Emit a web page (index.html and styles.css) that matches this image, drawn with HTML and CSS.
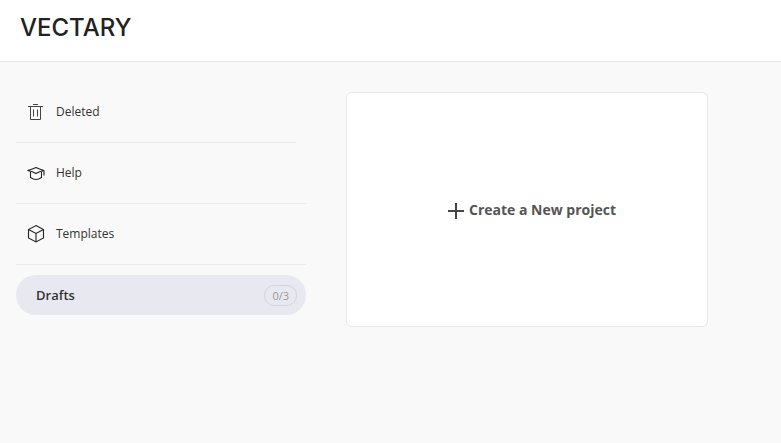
FILE: index.html
```html
<!DOCTYPE html>
<html lang="en">
	<head>
		<meta charset="UTF-8" />
		<meta name="viewport" content="width=device-width, initial-scale=1" />
		<title>Vectary</title>
		<link rel="stylesheet" href="styles.css">
	</head>
	<body>
		<header class="header">
			<a class="logo" href="#">VECTARY</a>
		</header>

		<main class="dashboard">
			<nav class="sidebar">
				<a class="nav-link nav-link-short" href="#deleted">
					<svg class="icon" viewBox="0 0 20 20" aria-hidden="true">
						<path d="M2 5.5h15M7 3.5h5M4.5 6v12.5h10V6M7.5 8.5v7M11.5 8.5v7" />
					</svg>
					Deleted
				</a>
				<a class="nav-link" href="#help">
					<svg class="icon icon-dark" viewBox="0 0 20 20" aria-hidden="true">
						<path d="M1.5 8.5Q7 7 10 5.5Q13 7 18 8.5Q13 9.5 10 11.5Q7 9.5 1.5 8.5zM4.5 10v5.5Q10 19.5 15.5 15.5V10M18 8.5v5" />
					</svg>
					Help
				</a>
				<a class="nav-link" href="#templates">
					<svg class="icon icon-dark" viewBox="0 0 20 20" aria-hidden="true">
						<path d="M10 2.5l7.5 4V15L10 19 2.5 15V6.5zM2.5 6.5l7.5 4 7.5-4M10 10.5V19" />
					</svg>
					Templates
				</a>
				<a class="drafts" href="#drafts">
					Drafts
					<span class="count">0/3</span>
				</a>
			</nav>

			<section class="projects">
				<button class="new-project" type="button">
					<svg class="plus" viewBox="0 0 16 18" aria-hidden="true">
						<path d="M8 2v16M0 10h16" />
					</svg>
					Create a New project
				</button>
			</section>
		</main>
	</body>
</html>
```

FILE: styles.css
```css
* {
	box-sizing: border-box;
}

body {
	margin: 0;
	background: #f9f9f9;
	color: #333;
	font-family: "Open Sans", sans-serif;
	font-size: 12px;
}

a {
	color: inherit;
	text-decoration: none;
}

.header {
	display: flex;
	align-items: center;
	padding: 12px 20px 17px;
	background: #fff;
	border-bottom: 1px solid #e8e8e8;
}

.logo {
	color: #222;
	font-family: Inter, sans-serif;
	font-size: 24px;
	font-weight: 500;
	line-height: 32px;
}

.dashboard {
	display: grid;
	grid-template-columns: 290px 1fr;
	gap: 40px;
	padding: 20px 16px;
}

.nav-link {
	display: flex;
	align-items: center;
	gap: 10px;
	height: 61px;
	padding: 0 0 2px 10px;
	border-bottom: 1px solid #ececec;
}

.nav-link-short {
	margin-right: 10px;
}

.icon {
	width: 20px;
	height: 20px;
	fill: none;
	stroke: #444;
	stroke-width: 1;
}

.icon-dark {
	stroke: #222;
	stroke-width: 1.1;
}

.drafts {
	display: flex;
	align-items: center;
	justify-content: space-between;
	height: 40px;
	margin-top: 10px;
	padding: 0 9px 0 20px;
	border-radius: 20px;
	background: #e8e8f1;
	font-size: 13px;
	font-weight: 600;
}

.count {
	padding: 0 7px;
	border: 1px solid #d4d4dd;
	border-radius: 10px;
	color: #999;
	font-size: 11px;
	font-weight: 400;
	line-height: 19px;
}

.projects {
	padding-top: 10px;
}

.new-project {
	display: flex;
	align-items: center;
	justify-content: center;
	gap: 5px;
	width: 100%;
	max-width: 362px;
	min-height: 235px;
	padding: 0 0 0 10px;
	border: 1px solid #e8e8e8;
	border-radius: 6px;
	background: #fff;
	color: #555;
	font-family: inherit;
	font-size: 14px;
	font-weight: 700;
	cursor: pointer;
}

.plus {
	width: 16px;
	height: 18px;
	stroke: #444;
	stroke-width: 2;
}
```
